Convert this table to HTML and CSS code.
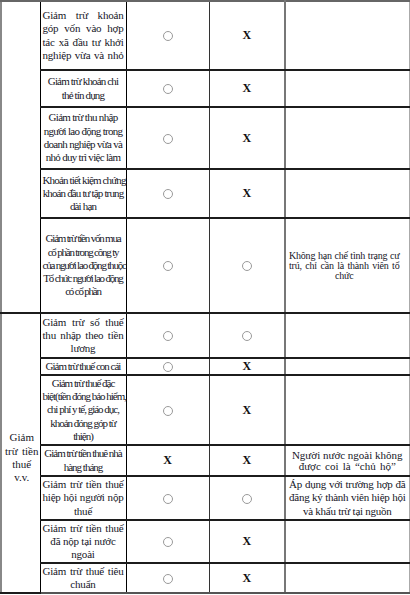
FILE: index.html
```html
<!DOCTYPE html>
<html lang="vi">
<head>
<meta charset="utf-8">
<title>Giảm trừ</title>
<link rel="stylesheet" href="styles.css">
</head>
<body>
<table class="grid">
  <colgroup>
    <col class="w1"><col class="w2"><col class="w3"><col class="w4"><col class="w5">
  </colgroup>
  <tbody>
    <tr class="h69 first">
      <td class="cat" rowspan="5"></td>
      <td class="item"><span class="ln j">Giảm trừ khoản</span><span class="ln j">góp vốn vào hợp</span><span class="ln j">tác xã đầu tư khởi</span><span class="ln j">nghiệp vừa và nhỏ</span></td>
      <td class="m3"><span class="o"></span></td>
      <td class="m4"><b class="x">X</b></td>
      <td class="note"></td>
    </tr>
    <tr class="h37">
      <td class="item t8"><span class="ln">Giảm trừ khoản chi</span><span class="ln">thẻ tín dụng</span></td>
      <td class="m3"><span class="o"></span></td>
      <td class="m4"><b class="x">X</b></td>
      <td class="note"></td>
    </tr>
    <tr class="h62">
      <td class="item t7"><span class="ln">Giảm trừ thu nhập</span><span class="ln">người lao động trong</span><span class="ln">doanh nghiệp vừa và</span><span class="ln">nhỏ duy trì việc làm</span></td>
      <td class="m3"><span class="o"></span></td>
      <td class="m4"><b class="x">X</b></td>
      <td class="note"></td>
    </tr>
    <tr class="h49">
      <td class="item t8"><span class="ln">Khoản tiết kiệm chứng</span><span class="ln">khoán đầu tư tập trung</span><span class="ln">dài hạn</span></td>
      <td class="m3"><span class="o"></span></td>
      <td class="m4"><b class="x">X</b></td>
      <td class="note"></td>
    </tr>
    <tr class="h95">
      <td class="item t12"><span class="ln">Giảm trừ tiền vốn mua</span><span class="ln">cổ phần trong công ty</span><span class="ln">của người lao động thuộc</span><span class="ln">Tổ chức người lao động</span><span class="ln">có cổ phần</span></td>
      <td class="m3"><span class="o"></span></td>
      <td class="m4"><span class="o"></span></td>
      <td class="note small"><span class="ln j">Không hạn chế tình trạng cư</span><span class="ln j">trú, chỉ cần là thành viên tổ</span><span class="ln">chức</span></td>
    </tr>
    <tr class="h45">
      <td class="cat low" rowspan="7"><span class="ln">Giảm</span><span class="ln j">trừ tiền</span><span class="ln">thuế</span><span class="ln">v.v.</span></td>
      <td class="item"><span class="ln j">Giảm trừ số thuế</span><span class="ln j">thu nhập theo tiền</span><span class="ln">lương</span></td>
      <td class="m3"><span class="o"></span></td>
      <td class="m4"><span class="o"></span></td>
      <td class="note"></td>
    </tr>
    <tr class="h17">
      <td class="item t10"><span class="ln">Giảm trừ thuế con cái</span></td>
      <td class="m3"><span class="o"></span></td>
      <td class="m4"><b class="x">X</b></td>
      <td class="note"></td>
    </tr>
    <tr class="h70">
      <td class="item t10"><span class="ln">Giảm trừ thuế đặc</span><span class="ln">biệt(tiền đóng bảo hiểm,</span><span class="ln">chi phí y tế, giáo dục,</span><span class="ln">khoản đóng góp từ</span><span class="ln">thiện)</span></td>
      <td class="m3"><span class="o"></span></td>
      <td class="m4"><b class="x">X</b></td>
      <td class="note"></td>
    </tr>
    <tr class="h31">
      <td class="item t10"><span class="ln">Giảm trừ tiền thuê nhà</span><span class="ln">hàng tháng</span></td>
      <td class="m3"><b class="x">X</b></td>
      <td class="m4"><b class="x">X</b></td>
      <td class="note tight"><span class="ln">Người nước ngoài không</span><span class="ln wide">được coi là “chủ hộ”</span></td>
    </tr>
    <tr class="h44">
      <td class="item"><span class="ln j">Giảm trừ tiền thuế</span><span class="ln j">hiệp hội người nộp</span><span class="ln">thuế</span></td>
      <td class="m3"><span class="o"></span></td>
      <td class="m4"><span class="o"></span></td>
      <td class="note snug"><span class="ln j">Áp dụng với trường hợp đã</span><span class="ln j">đăng ký thành viên hiệp hội</span><span class="ln">và khấu trừ tại nguồn</span></td>
    </tr>
    <tr class="h43">
      <td class="item"><span class="ln j">Giảm trừ tiền thuế</span><span class="ln">đã nộp tại nước</span><span class="ln">ngoài</span></td>
      <td class="m3"><span class="o"></span></td>
      <td class="m4"><b class="x">X</b></td>
      <td class="note"></td>
    </tr>
    <tr class="h30 last">
      <td class="item"><span class="ln j">Giảm trừ thuế tiêu</span><span class="ln">chuẩn</span></td>
      <td class="m3"><span class="o"></span></td>
      <td class="m4"><b class="x">X</b></td>
      <td class="note"></td>
    </tr>
  </tbody>
</table>
</body>
</html>
```

FILE: styles.css
```css
html, body {
  margin: 0;
  padding: 0;
  background: #ffffff;
}

body {
  font-family: "Liberation Serif", "Times New Roman", serif;
  color: #16161f;
}

.grid {
  border-collapse: collapse;
  table-layout: fixed;
  width: 409px;
  font-size: 11px;
  line-height: 13.3px;
}

.w1 { width: 39px; }
.w2 { width: 86px; }
.w3 { width: 83px; }
.w4 { width: 76px; }
.w5 { width: 124px; }

.grid td {
  padding: 0 2px;
  vertical-align: middle;
  text-align: center;
  border-top: 2px solid #1c1c1c;
  border-bottom: 2px solid #1c1c1c;
  border-left: 1px solid #000;
  border-right: 1px solid #000;
}

.first td { border-top: 2px solid #666; }
.last td { border-bottom: 2px solid #555; }

.h69 { height: 69px; }
.h37 { height: 37px; }
.h62 { height: 62px; }
.h49 { height: 49px; }
.h95 { height: 95px; }
.h45 { height: 45px; }
.h17 { height: 17px; }
.h70 { height: 70px; }
.h31 { height: 31px; }
.h44 { height: 44px; }
.h43 { height: 43px; }
.h30 { height: 30px; }

.grid td.cat {
  border-left: 2px solid #888;
  padding: 0 1px 0 3px;
}

.grid td.cat.low {
  padding-top: 10px;
}

.cat .ln { white-space: nowrap; }

.ln {
  display: block;
  text-align: center;
}

.ln.j {
  text-align: justify;
  text-align-last: justify;
}

.item { letter-spacing: -0.2px; }
.item.t7 .ln, .item.t8 .ln, .item.t10 .ln, .item.t12 .ln { white-space: nowrap; }
.item.t7 { letter-spacing: -0.7px; }
.item.t8 { letter-spacing: -0.85px; }
.item.t10 { letter-spacing: -1px; }
.item.t12 { letter-spacing: -1.2px; }

.grid td.m3 {
  border-right: 1px solid #333;
  line-height: 1;
}

.grid td.m4 {
  border-right: 2px solid #777;
  line-height: 1;
}

.grid td.note {
  border-left: 2px solid #777;
  border-right: 1px solid #aaa;
  padding: 0 3px;
}

.grid td.note.small {
  font-size: 10px;
  line-height: 10px;
  letter-spacing: -0.2px;
  padding: 0 9px 0 3px;
}

.grid td.note.tight {
  line-height: 11px;
}

.note .wide { word-spacing: 1.5px; }

.grid td.note.snug {
  letter-spacing: -0.25px;
}

.o {
  display: inline-block;
  width: 10px;
  height: 10px;
  box-sizing: border-box;
  border: 1px solid #9a9a9a;
  border-radius: 50%;
  vertical-align: middle;
}

.x {
  font-weight: bold;
  font-size: 12px;
  color: #111;
  vertical-align: middle;
}
```
